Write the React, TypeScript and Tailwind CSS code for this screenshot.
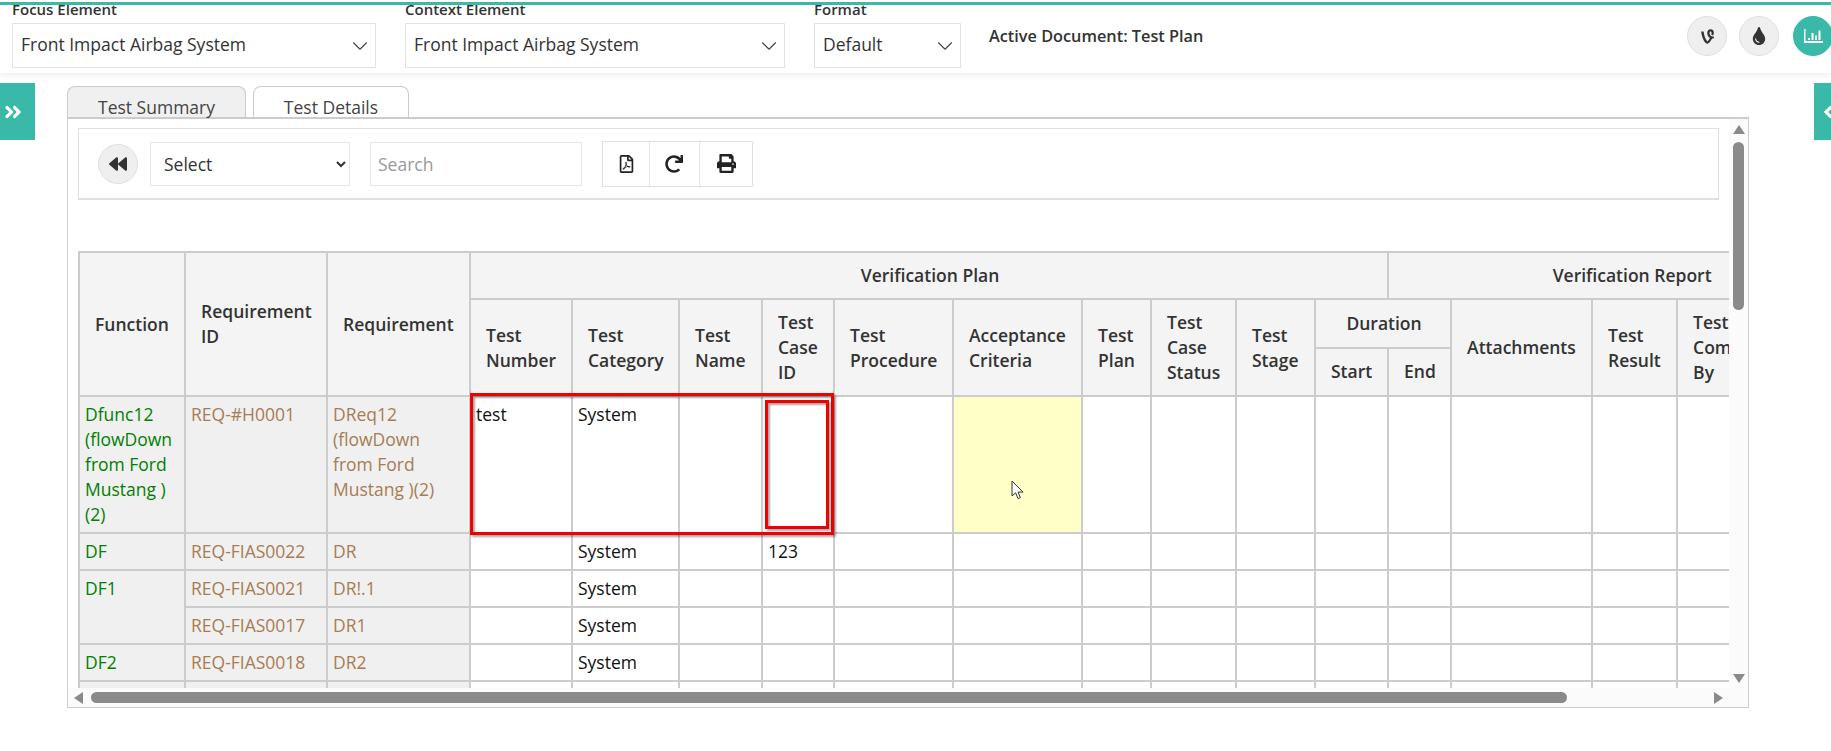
import { ChevronDown } from "lucide-react";
import {
  FaAngleDoubleLeft,
  FaAngleDoubleRight,
  FaBackward,
  FaPrint,
  FaRedo,
  FaRegFilePdf,
  FaTint,
  FaVine,
} from "react-icons/fa";

const colWidths = [106, 142, 143, 102, 107, 83, 72, 119, 129, 69, 85, 79, 73, 63, 141, 85, 115, 82];

type Row = {
  fn?: string;
  fnSpan?: number;
  id?: string;
  req?: string;
  number?: string;
  category?: string;
  caseId?: string;
  height: string;
};

const rows: Row[] = [
  {
    fn: "Dfunc12 (flowDown from Ford Mustang )(2)",
    id: "REQ-#H0001",
    req: "DReq12 (flowDown from Ford Mustang )(2)",
    number: "test",
    category: "System",
    height: "h-[137px]",
  },
  { fn: "DF", id: "REQ-FIAS0022", req: "DR", category: "System", caseId: "123", height: "h-[37px]" },
  { fn: "DF1", fnSpan: 2, id: "REQ-FIAS0021", req: "DR!.1", category: "System", height: "h-[37px]" },
  { id: "REQ-FIAS0017", req: "DR1", category: "System", height: "h-[37px]" },
  { fn: "DF2", id: "REQ-FIAS0018", req: "DR2", category: "System", height: "h-[37px]" },
  // only the top edge of this row shows above the scrollbar
  { fn: "\u00a0", height: "h-[37px]" },
];

const thBase = "border-2 border-[#ccc] bg-[#f4f4f4] pr-[13px] pl-[15px] font-semibold text-[#333]";
const th = `${thBase} py-0 text-left`;
const thSub = `${thBase} pt-0 pb-[2px] text-left`;
const thCenter = `${thBase} py-0 text-center`;
const td = "border-2 border-[#ccc] pr-[3px] pl-[5px] pt-[5px] pb-[3px] align-top font-normal";
const side = "bg-[#f0f0f0]";

function HeaderSelect({ label, value, width }: { label: string; value: string; width: string }) {
  return (
    <div className={width}>
      <div className="-mt-[7px] text-[15px] leading-[22px] font-semibold text-[#333]">{label}</div>
      <div className="mt-[3px] flex h-[45px] items-center justify-between border border-[#e3e3e3] bg-white pr-[2px] pb-[2px] pl-[8px] text-[17.5px] text-[#333]">
        <span>{value}</span>
        <ChevronDown className="mt-[2px] h-[26px] w-[26px] text-[#444]" strokeWidth={1} />
      </div>
    </div>
  );
}

function RoundButton({ children, active }: { children: React.ReactNode; active?: boolean }) {
  return (
    <div
      className={
        "flex h-[40px] w-[40px] shrink-0 items-center justify-center rounded-full border " +
        (active ? "border-[#3ab8a8] bg-[#3ab8a8] text-white" : "border-[#e0e0e4] bg-[#efefef] text-[#333]")
      }
    >
      {children}
    </div>
  );
}

function ChartIcon() {
  return (
    <svg width="19" height="15" viewBox="0 0 19 15" fill="currentColor">
      <path d="M0 0h1.5v12H19v2H0z" />
      <rect x="4" y="9" width="2" height="2" />
      <rect x="7.5" y="4" width="2" height="7" />
      <rect x="11" y="6.5" width="2" height="4.5" />
      <rect x="14.5" y="1.5" width="2" height="9.5" />
    </svg>
  );
}

function Toolbar() {
  return (
    <div className="flex h-[72px] w-[1641px] items-center border border-b-2 border-[#e0e0e0] pl-[19px]">
      <RoundButton>
        <FaBackward className="h-[18px] w-[18px]" />
      </RoundButton>
      <select className="ml-[12px] h-[44px] w-[200px] border border-[#e6e6e6] bg-white pl-[9px] text-[17.5px] text-[#333]">
        <option>Select</option>
      </select>
      <input
        placeholder="Search"
        className="ml-[20px] h-[44px] w-[212px] border border-[#e6e6e6] bg-white pl-[7px] text-[17.5px] placeholder:text-[#999]"
      />
      <div className="ml-[20px] flex h-[46px] border border-[#e0e0e0] text-[#222]">
        <div className="flex w-[47px] items-center justify-center border-r border-[#e6e6e6]">
          <FaRegFilePdf className="h-[18px] w-[15px]" />
        </div>
        <div className="flex w-[50px] items-center justify-center border-r border-[#e6e6e6] pr-[2px]">
          <FaRedo className="h-[18px] w-[18px]" />
        </div>
        <div className="flex w-[52px] items-center justify-center">
          <FaPrint className="h-[19px] w-[19px]" />
        </div>
      </div>
    </div>
  );
}

function PlanTable() {
  return (
    <table className="mt-[51px] w-[1795px] table-fixed border-collapse text-[17.5px] leading-[25px]">
      <colgroup>
        {colWidths.map((w, i) => (
          <col key={i} style={{ width: w }} />
        ))}
      </colgroup>
      <thead>
        <tr className="h-[47px]">
          <th rowSpan={3} className={th}>Function</th>
          <th rowSpan={3} className={th}>Requirement ID</th>
          <th rowSpan={3} className={th}>Requirement</th>
          <th colSpan={10} className={thCenter}>Verification Plan</th>
          <th colSpan={5} className={thCenter}>Verification Report</th>
        </tr>
        <tr className="h-[49px]">
          <th rowSpan={2} className={th}>Test Number</th>
          <th rowSpan={2} className={th}>Test Category</th>
          <th rowSpan={2} className={th}>Test Name</th>
          <th rowSpan={2} className={th}>Test Case ID</th>
          <th rowSpan={2} className={th}>Test Procedure</th>
          <th rowSpan={2} className={th}>Acceptance Criteria</th>
          <th rowSpan={2} className={th}>Test Plan</th>
          <th rowSpan={2} className={th}>Test Case Status</th>
          <th rowSpan={2} className={th}>Test Stage</th>
          <th colSpan={2} className={thCenter}>Duration</th>
          <th rowSpan={2} className={th}>Attachments</th>
          <th rowSpan={2} className={th}>Test Result</th>
          <th rowSpan={2} className={th}>Test Completed By</th>
          <th rowSpan={2} className={th} />
        </tr>
        <tr className="h-[48px]">
          <th className={thSub}>Start</th>
          <th className={thSub}>End</th>
        </tr>
      </thead>
      <tbody className="text-[#111]">
        {rows.map((row, i) => (
          <tr key={i} className={row.height}>
            {row.fn && (
              <td rowSpan={row.fnSpan} className={`${td} ${side} text-[#008000]`}>
                {row.fn}
              </td>
            )}
            <td className={`${td} ${side} text-[#a87c53]`}>{row.id}</td>
            <td className={`${td} ${side} !pr-[20px] text-[#a87c53]`}>{row.req}</td>
            <td className={td}>{row.number}</td>
            <td className={td}>{row.category}</td>
            <td className={td} />
            <td className={td}>{row.caseId}</td>
            <td className={td} />
            <td className={i === 0 ? `${td} bg-[#ffffc8]` : td} />
            {Array.from({ length: 9 }).map((_, c) => (
              <td key={c} className={td} />
            ))}
          </tr>
        ))}
      </tbody>
    </table>
  );
}

function VerticalScrollbar() {
  return (
    <div className="flex w-[19px] shrink-0 flex-col items-center bg-[#fbfbfb]">
      <div className="mt-[6px] h-0 w-0 border-x-[6px] border-b-[9px] border-x-transparent border-b-[#8a8a8a]" />
      <div className="mt-[8px] h-[168px] w-[11px] rounded-full bg-[#8a8a8a]" />
      <div className="mt-auto mb-[5px] h-0 w-0 border-x-[6px] border-t-[9px] border-x-transparent border-t-[#8a8a8a]" />
    </div>
  );
}

function HorizontalScrollbar() {
  return (
    <div className="flex h-[19px] shrink-0 items-center bg-[#fbfbfb] pr-[25px] pl-[6px]">
      <div className="h-0 w-0 border-y-[6px] border-r-[9px] border-y-transparent border-r-[#8a8a8a]" />
      <div className="ml-[8px] h-[11px] w-[1476px] rounded-full bg-[#8a8a8a]" />
      <div className="ml-auto h-0 w-0 border-y-[6px] border-l-[9px] border-y-transparent border-l-[#8a8a8a]" />
    </div>
  );
}

export default function App() {
  return (
    <div className="relative h-[751px] w-[1831px] overflow-hidden bg-white font-['Open_Sans',sans-serif]">
      {/* Teal strip sits over the clipped field labels */}
      <div className="relative z-10 mt-[2px] h-[3px] bg-[#3ab8a8]" />

      <header className="flex h-[68px] items-start pl-[12px] shadow-[0_2px_6px_rgba(0,0,0,0.08)]">
        <HeaderSelect label="Focus Element" value="Front Impact Airbag System" width="w-[364px]" />
        <div className="ml-[29px]">
          <HeaderSelect label="Context Element" value="Front Impact Airbag System" width="w-[380px]" />
        </div>
        <div className="ml-[29px]">
          <HeaderSelect label="Format" value="Default" width="w-[147px]" />
        </div>
        <div className="mt-[19px] ml-[28px] text-[16.3px] leading-[24px] font-semibold text-[#333]">
          Active Document: Test Plan
        </div>
        <div className="mt-[11px] ml-auto flex w-[144px] shrink-0 gap-[12px]">
          <RoundButton>
            <FaVine className="h-[17px] w-[17px]" />
          </RoundButton>
          <RoundButton>
            <FaTint className="h-[18px] w-[18px]" />
          </RoundButton>
          <div className="ml-[2px]">
            <RoundButton active>
              <ChartIcon />
            </RoundButton>
          </div>
        </div>
      </header>

      <div className="flex items-start">
        <div className="mt-[10px] flex h-[57px] w-[35px] shrink-0 items-center bg-[#3ab8a8] pl-[3px] text-white">
          <FaAngleDoubleRight className="h-[20px] w-[20px]" />
        </div>

        <main className="mt-[13px] ml-[32px] w-[1682px] shrink-0">
          <div className="flex h-[31px] gap-[7px] text-[17.5px] leading-[25px] text-[#444]">
            <div className="h-[31px] w-[179px] rounded-t-lg border border-b-0 border-[#ccc] bg-[#f0f0f0] pt-[8px] text-center">
              Test Summary
            </div>
            <div className="h-[31px] w-[156px] rounded-t-lg border border-b-0 border-[#ccc] bg-white pt-[8px] text-center">
              Test Details
            </div>
          </div>
          <section className="flex h-[591px] flex-col border border-t-2 border-[#ccc]">
            <div className="flex min-h-0 flex-1">
              <div className="w-[1661px] shrink-0 overflow-hidden pt-[9px] pl-[10px]">
                <Toolbar />
                <PlanTable />
              </div>
              <VerticalScrollbar />
            </div>
            <HorizontalScrollbar />
          </section>
        </main>

        <div className="mt-[10px] ml-[65px] flex h-[57px] w-[40px] shrink-0 items-center bg-[#3ab8a8] pl-[8px] text-white">
          <FaAngleDoubleLeft className="h-[20px] w-[20px]" />
        </div>
      </div>

      {/* Annotation boxes drawn on top of the table */}
      <div className="absolute top-[393px] left-[470px] h-[142px] w-[364px] border-[3px] border-[#f00000] shadow-[2px_2px_2px_rgba(0,0,0,0.35),inset_2px_2px_2px_rgba(0,0,0,0.35)]" />
      <div className="absolute top-[400px] left-[765px] h-[129px] w-[64px] border-[3px] border-[#f00000] shadow-[2px_2px_2px_rgba(0,0,0,0.35),inset_2px_2px_2px_rgba(0,0,0,0.35)]" />

      {/* Mouse pointer */}
      <svg className="absolute top-[480px] left-[1011px]" width="14" height="20" viewBox="0 0 14 20">
        <path d="M1 1v15l3.6-3.2L7 18.5l2.4-1-2.4-5.4h5z" fill="#fff" stroke="#333" strokeWidth="1" strokeLinejoin="round" />
      </svg>
    </div>
  );
}
